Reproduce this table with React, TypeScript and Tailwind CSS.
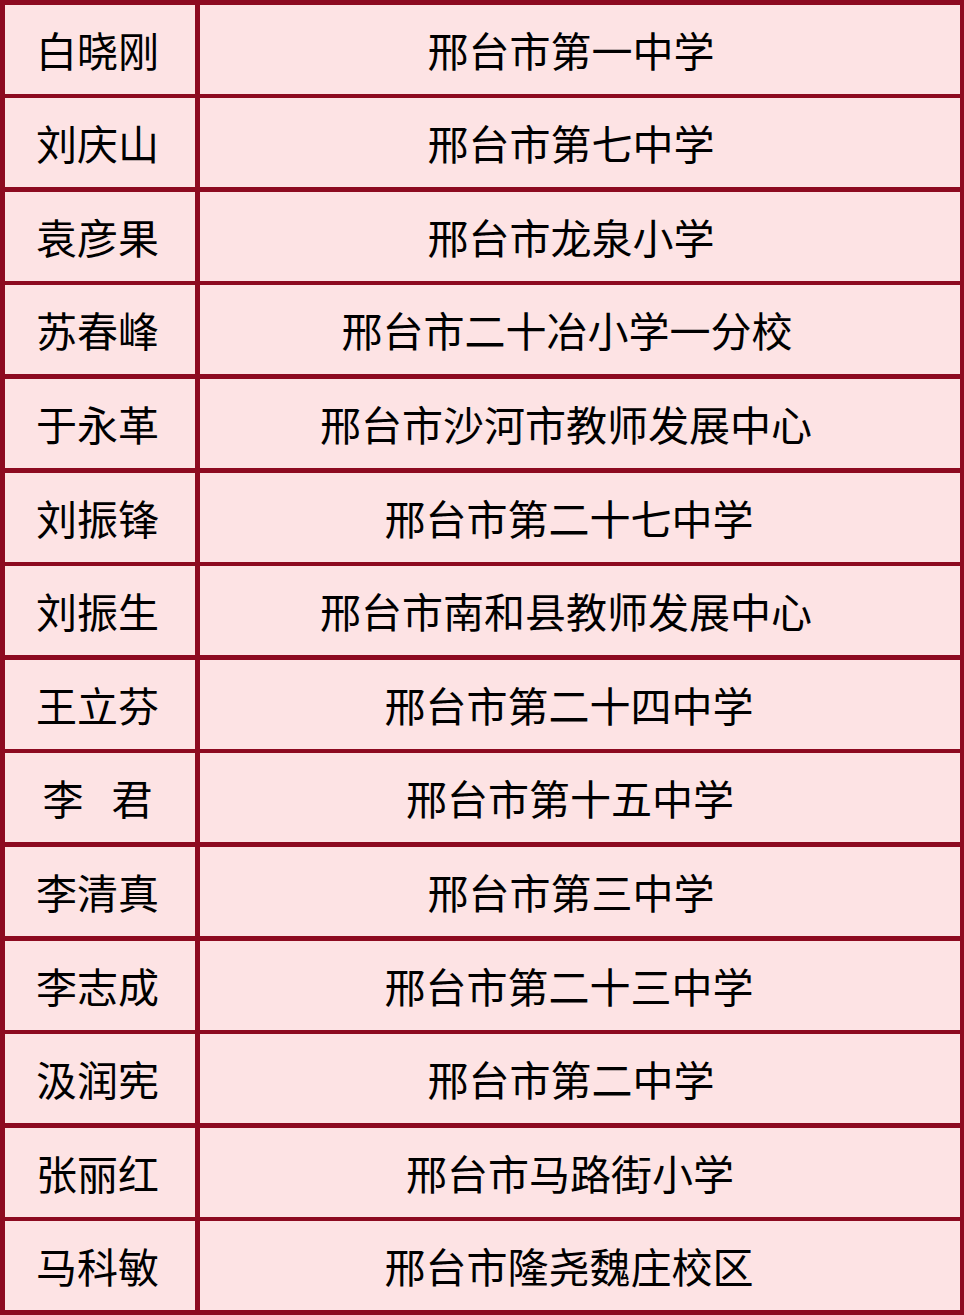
const rows: { name: string; school: string }[] = [
  { name: "白晓刚", school: "邢台市第一中学" },
  { name: "刘庆山", school: "邢台市第七中学" },
  { name: "袁彦果", school: "邢台市龙泉小学" },
  { name: "苏春峰", school: "邢台市二十冶小学一分校" },
  { name: "于永革", school: "邢台市沙河市教师发展中心" },
  { name: "刘振锋", school: "邢台市第二十七中学" },
  { name: "刘振生", school: "邢台市南和县教师发展中心" },
  { name: "王立芬", school: "邢台市第二十四中学" },
  { name: "李君", school: "邢台市第十五中学" },
  { name: "李清真", school: "邢台市第三中学" },
  { name: "李志成", school: "邢台市第二十三中学" },
  { name: "汲润宪", school: "邢台市第二中学" },
  { name: "张丽红", school: "邢台市马路街小学" },
  { name: "马科敏", school: "邢台市隆尧魏庄校区" },
];

function NameCell({ name }: { name: string }) {
  if (name.length === 2) {
    return (
      <span>
        {name[0]}
        <span className="inline-block w-[28px]" />
        {name[1]}
      </span>
    );
  }
  return <span>{name}</span>;
}

export default function App() {
  return (
    <div
      className="h-[1315px] w-[964px] bg-[#8d0a20] py-[4.5px] pl-[5px] pr-[4.5px] text-[41px] leading-none text-black"
      style={{ fontFamily: '"Noto Sans CJK SC", "Noto Sans", sans-serif' }}
    >
      <div className="grid h-full grid-cols-[190px_1fr] grid-rows-[repeat(14,minmax(0,1fr))] gap-x-[4.5px] gap-y-[4.5px]">
        {rows.map((r) => (
          <div key={r.name} className="contents">
            <div className="flex items-center justify-center bg-[#fde3e4] pr-[5px]">
              <NameCell name={r.name} />
            </div>
            {/* longer school names sit a little further left in the original */}
            <div
              className="flex items-center justify-center bg-[#fde3e4]"
              style={{ paddingRight: 3 + 2 * r.school.length }}
            >
              {r.school}
            </div>
          </div>
        ))}
      </div>
    </div>
  );
}
